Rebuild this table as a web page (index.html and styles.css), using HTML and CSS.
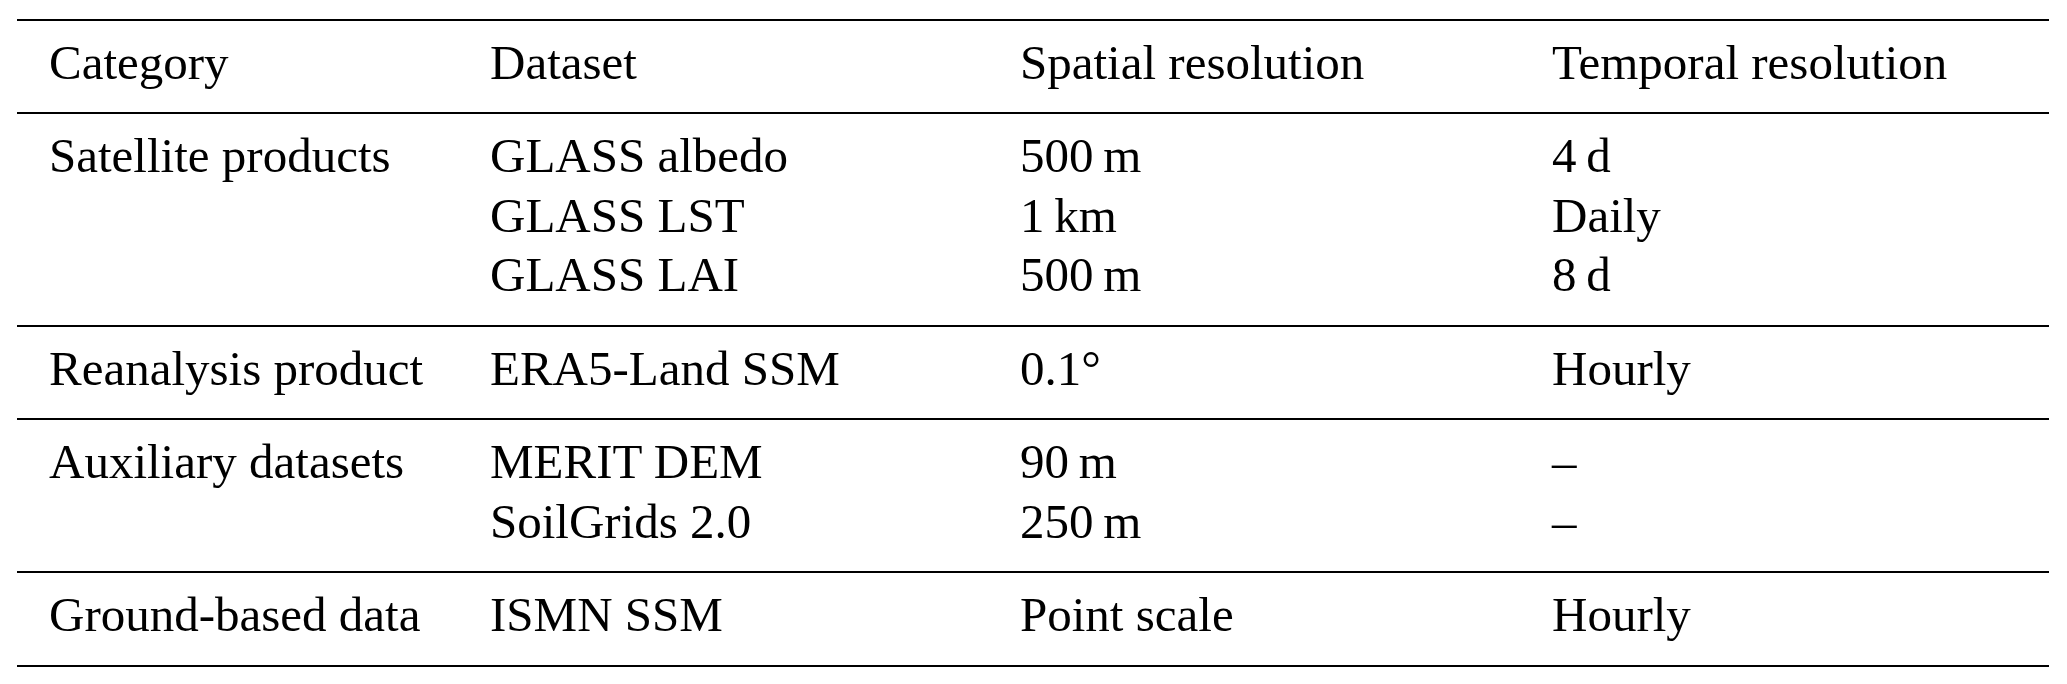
FILE: index.html
```html
<!DOCTYPE html>
<html lang="en">
<head>
<meta charset="utf-8">
<title>Datasets</title>
<link rel="stylesheet" href="styles.css">
</head>
<body>
<table class="data-table">
  <colgroup>
    <col class="c1"><col class="c2"><col class="c3"><col class="c4">
  </colgroup>
  <thead>
    <tr>
      <th>Category</th>
      <th>Dataset</th>
      <th>Spatial resolution</th>
      <th>Temporal resolution</th>
    </tr>
  </thead>
  <tbody>
    <tr>
      <td><div class="ln">Satellite products</div></td>
      <td><div class="ln">GLASS albedo</div><div class="ln">GLASS LST</div><div class="ln">GLASS LAI</div></td>
      <td><div class="ln">500&#8201;m</div><div class="ln">1&#8201;km</div><div class="ln">500&#8201;m</div></td>
      <td><div class="ln">4&#8201;d</div><div class="ln">Daily</div><div class="ln">8&#8201;d</div></td>
    </tr>
    <tr>
      <td><div class="ln">Reanalysis product</div></td>
      <td><div class="ln">ERA5-Land SSM</div></td>
      <td><div class="ln">0.1°</div></td>
      <td><div class="ln">Hourly</div></td>
    </tr>
    <tr>
      <td><div class="ln">Auxiliary datasets</div></td>
      <td><div class="ln">MERIT DEM</div><div class="ln">SoilGrids 2.0</div></td>
      <td><div class="ln">90&#8201;m</div><div class="ln">250&#8201;m</div></td>
      <td><div class="ln">&ndash;</div><div class="ln">&ndash;</div></td>
    </tr>
    <tr class="last">
      <td><div class="ln">Ground-based data</div></td>
      <td><div class="ln">ISMN SSM</div></td>
      <td><div class="ln">Point scale</div></td>
      <td><div class="ln">Hourly</div></td>
    </tr>
  </tbody>
</table>
</body>
</html>
```

FILE: styles.css
```css
html, body {
  margin: 0;
  padding: 0;
  background: #ffffff;
}

body {
  font-family: "Liberation Serif", "Times New Roman", serif;
  font-size: 49px;
  color: #000000;
}

.data-table {
  margin: 18.5px 0 0 17px;
  width: 2032px;
  table-layout: fixed;
  border-collapse: separate;
  border-spacing: 0;
}

.c1 { width: 441px; }
.c2 { width: 530px; }
.c3 { width: 532px; }
.c4 { width: 529px; }

.data-table th,
.data-table td {
  font-family: "Liberation Serif", "Times New Roman", serif;
  font-weight: normal;
  text-align: left;
  vertical-align: top;
  padding: 12px 0 20px 32px;
  line-height: 59.5px;
  border-top: 2px solid #000000;
  white-space: nowrap;
}

.data-table .last td {
  border-bottom: 2px solid #000000;
}

.ln {
  height: 59.5px;
}
```
